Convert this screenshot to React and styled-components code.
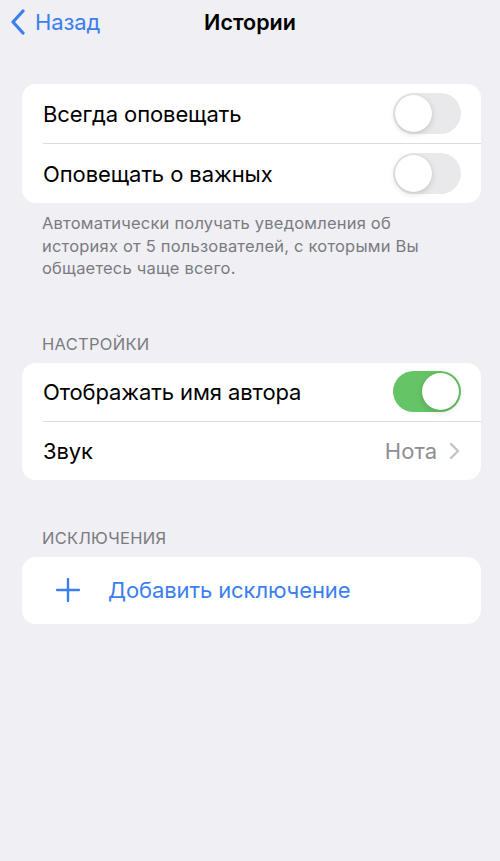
import styled, { createGlobalStyle } from "styled-components";

const GlobalStyle = createGlobalStyle`
  html, body {
    margin: 0;
    padding: 0;
    background: #efeff4;
  }
  body {
    font-family: Inter, "Noto Sans", sans-serif;
    -webkit-font-smoothing: antialiased;
  }
`;

const Screen = styled.div`
  width: 500px;
  min-height: 861px;
  background: #efeff4;
  display: flex;
  flex-direction: column;
`;

const NavBar = styled.header`
  height: 44px;
  display: grid;
  grid-template-columns: 1fr auto 1fr;
  align-items: center;
  padding: 0 10px;
`;

const BackButton = styled.button`
  display: flex;
  align-items: center;
  gap: 9px;
  background: none;
  border: none;
  padding: 0;
  color: #3a7ef0;
  font: inherit;
  font-size: 22px;
  letter-spacing: -0.1px;
  cursor: pointer;
  justify-self: start;
`;

const Title = styled.h1`
  margin: 0;
  font-size: 21.5px;
  font-weight: 600;
  color: #000;
  letter-spacing: 0;
`;

const Content = styled.main`
  display: flex;
  flex-direction: column;
  padding: 40px 19px 0 22px;
`;

const Group = styled.section`
  display: flex;
  flex-direction: column;
  margin-bottom: ${(p) => p.$gap || 0}px;
`;

const GroupHeader = styled.div`
  padding: 0 0 9px 20px;
  font-size: 16.5px;
  color: #7b7b80;
  letter-spacing: 0.3px;
  text-transform: uppercase;
`;

const Card = styled.div`
  background: #fff;
  border-radius: 14px;
  overflow: hidden;
`;

const Row = styled.div`
  height: ${(p) => p.$height || 59}px;
  display: flex;
  align-items: center;
  padding-left: ${(p) => p.$indent || 21}px;
`;

const RowBody = styled.div`
  flex: 1;
  height: 100%;
  display: flex;
  align-items: center;
  padding-right: 20px;
  box-sizing: border-box;
  border-top: ${(p) => (p.$divider ? "1px solid #dcdce0" : "none")};
`;

const Label = styled.span`
  flex: 1;
  font-size: 22px;
  color: ${(p) => (p.$accent ? "#3a7ef0" : "#000")};
  letter-spacing: -0.1px;
`;

const Value = styled.span`
  font-size: 22px;
  color: #8e8e93;
  margin-right: 12px;
`;

const Switch = styled.div`
  width: 68px;
  height: 41px;
  border-radius: 21px;
  background: ${(p) => (p.$on ? "#65c466" : "#e9e9eb")};
  position: relative;
  flex-shrink: 0;
  &::after {
    content: "";
    position: absolute;
    top: 2px;
    left: ${(p) => (p.$on ? "29px" : "2px")};
    width: 37px;
    height: 37px;
    border-radius: 50%;
    background: #fff;
    box-shadow: 0 2px 6px rgba(0, 0, 0, 0.15), 0 0 1px rgba(0, 0, 0, 0.1);
  }
`;

const Footnote = styled.p`
  margin: 0;
  padding: 9px 30px 0 20px;
  font-size: 16.5px;
  line-height: 22.5px;
  letter-spacing: 0.2px;
  color: #7b7b80;
`;

const PlusIcon = styled.span`
  width: 24px;
  height: 24px;
  margin-right: 28px;
  display: flex;
`;

const Chevron = () => (
  <svg width="12" height="18" viewBox="0 0 12 18">
    <path d="M2 2l7 7-7 7" fill="none" stroke="#c4c4c7" strokeWidth="2.4" strokeLinecap="round" strokeLinejoin="round" />
  </svg>
);

const BackArrow = () => (
  <svg width="16" height="26" viewBox="0 0 16 26">
    <path d="M13 2L3 13l10 11" fill="none" stroke="#3a7ef0" strokeWidth="3.2" strokeLinecap="round" strokeLinejoin="round" />
  </svg>
);

export default function App() {
  return (
    <>
      <GlobalStyle />
      <Screen>
        <NavBar>
          <BackButton>
            <BackArrow />
            Назад
          </BackButton>
          <Title>Истории</Title>
          <span />
        </NavBar>
        <Content>
          <Group $gap={54}>
            <Card>
              <Row>
                <RowBody>
                  <Label>Всегда оповещать</Label>
                  <Switch />
                </RowBody>
              </Row>
              <Row $height={60}>
                <RowBody $divider>
                  <Label>Оповещать о важных</Label>
                  <Switch />
                </RowBody>
              </Row>
            </Card>
            <Footnote>
              Автоматически получать уведомления об историях от 5 пользователей, с которыми Вы
              общаетесь чаще всего.
            </Footnote>
          </Group>
          <Group $gap={48}>
            <GroupHeader>Настройки</GroupHeader>
            <Card>
              <Row $height={58}>
                <RowBody>
                  <Label>Отображать имя автора</Label>
                  <Switch $on />
                </RowBody>
              </Row>
              <Row $height={59}>
                <RowBody $divider>
                  <Label>Звук</Label>
                  <Value>Нота</Value>
                  <Chevron />
                </RowBody>
              </Row>
            </Card>
          </Group>
          <Group>
            <GroupHeader>Исключения</GroupHeader>
            <Card>
              <Row $height={67} $indent={34}>
                <RowBody>
                  <PlusIcon>
                    <svg width="24" height="24" viewBox="0 0 24 24">
                      <path d="M12 1v22M1 12h22" stroke="#3a7ef0" strokeWidth="2.4" strokeLinecap="round" />
                    </svg>
                  </PlusIcon>
                  <Label $accent>Добавить исключение</Label>
                </RowBody>
              </Row>
            </Card>
          </Group>
        </Content>
      </Screen>
    </>
  );
}
